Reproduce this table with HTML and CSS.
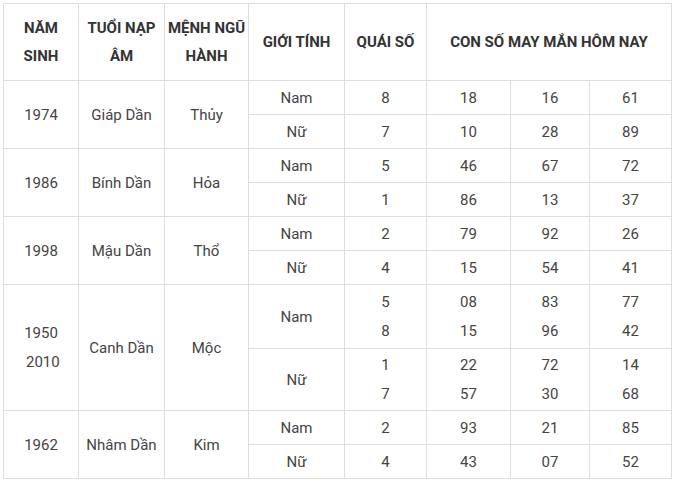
FILE: index.html
```html
<!DOCTYPE html>
<html lang="vi">
<head>
<meta charset="utf-8">
<title>Con số may mắn</title>
<link rel="stylesheet" href="styles.css">
</head>
<body>
<table class="lucky">
  <colgroup>
    <col class="c1"><col class="c2"><col class="c3"><col class="c4">
    <col class="c5"><col class="c6"><col class="c7"><col class="c8">
  </colgroup>
  <thead>
    <tr class="head">
      <th>NĂM<br>SINH</th>
      <th>TUỔI NẠP<br>ÂM</th>
      <th>MỆNH NGŨ<br>HÀNH</th>
      <th>GIỚI TÍNH</th>
      <th>QUÁI SỐ</th>
      <th colspan="3">CON SỐ MAY MẮN HÔM NAY</th>
    </tr>
  </thead>
  <tbody>
    <tr class="r"><td rowspan="2">1974</td><td rowspan="2">Giáp Dần</td><td rowspan="2">Thủy</td><td>Nam</td><td>8</td><td>18</td><td>16</td><td>61</td></tr>
    <tr class="r"><td>Nữ</td><td>7</td><td>10</td><td>28</td><td>89</td></tr>
    <tr class="r"><td rowspan="2">1986</td><td rowspan="2">Bính Dần</td><td rowspan="2">Hỏa</td><td>Nam</td><td>5</td><td>46</td><td>67</td><td>72</td></tr>
    <tr class="r"><td>Nữ</td><td>1</td><td>86</td><td>13</td><td>37</td></tr>
    <tr class="r"><td rowspan="2">1998</td><td rowspan="2">Mậu Dần</td><td rowspan="2">Thổ</td><td>Nam</td><td>2</td><td>79</td><td>92</td><td>26</td></tr>
    <tr class="r"><td>Nữ</td><td>4</td><td>15</td><td>54</td><td>41</td></tr>
    <tr class="r2a"><td rowspan="2" class="multi">1950<br>&nbsp;2010</td><td rowspan="2">Canh Dần</td><td rowspan="2">Mộc</td><td>Nam</td><td class="multi">5<br>8</td><td class="multi">08<br>15</td><td class="multi">83<br>96</td><td class="multi">77<br>42</td></tr>
    <tr class="r2b"><td>Nữ</td><td class="multi">1<br>7</td><td class="multi">22<br>57</td><td class="multi">72<br>30</td><td class="multi">14<br>68</td></tr>
    <tr class="r"><td rowspan="2">1962</td><td rowspan="2">Nhâm Dần</td><td rowspan="2">Kim</td><td>Nam</td><td>2</td><td>93</td><td>21</td><td>85</td></tr>
    <tr class="r"><td>Nữ</td><td>4</td><td>43</td><td>07</td><td>52</td></tr>
  </tbody>
</table>
</body>
</html>
```
FILE: styles.css
```css
html, body {
  margin: 0;
  padding: 0;
  background: #ffffff;
}
body {
  padding: 3px 0 0 3px;
  font-family: Roboto, "Liberation Sans", Arial, sans-serif;
  font-size: 15px;
  color: #444444;
}
.lucky {
  border-collapse: collapse;
  table-layout: fixed;
  width: 668px;
}
.c1 { width: 75px; }
.c2 { width: 86px; }
.c3 { width: 84px; }
.c4 { width: 96px; }
.c5 { width: 82px; }
.c6 { width: 84px; }
.c7 { width: 79px; }
.c8 { width: 82px; }
.lucky th,
.lucky td {
  border: 1px solid #dedede;
  padding: 0;
  text-align: center;
  vertical-align: middle;
}
.lucky th {
  font-weight: 700;
  color: #333333;
  line-height: 28px;
}
.head { height: 77px; }
.r { height: 34px; }
.r2a { height: 64px; }
.r2b { height: 62px; }
.lucky td { line-height: 20px; }
.lucky td.multi { line-height: 29px; }
```
